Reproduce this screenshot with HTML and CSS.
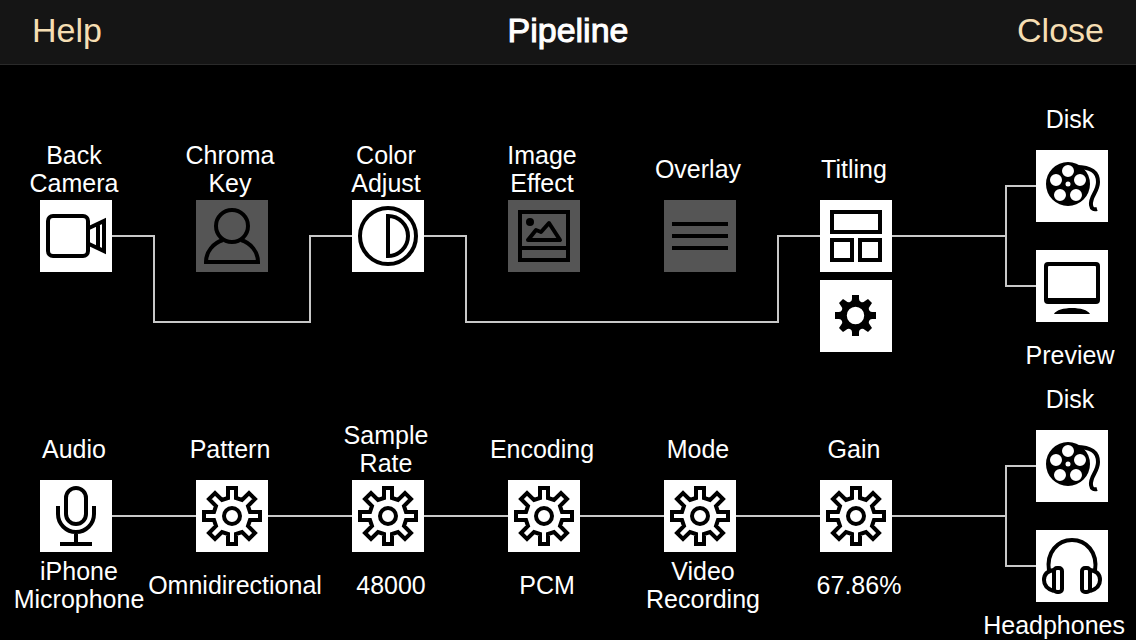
FILE: index.html
```html
<!DOCTYPE html>
<html lang="en">
<head>
<meta charset="utf-8">
<meta name="viewport" content="width=device-width, initial-scale=1">
<title>Pipeline</title>
<link rel="stylesheet" href="styles.css">
</head>
<body>
<svg class="sprite" aria-hidden="true">
  <symbol id="camera" viewBox="0 0 72 72"><rect x="8" y="16" width="40" height="40" rx="5"/><path d="M49 28 64 21V51L49 44M58 24V48"/></symbol>
  <symbol id="person" viewBox="0 0 72 72"><circle cx="36" cy="26" r="16"/><path d="M27 40C17 43 10 52 10 62H62C62 52 55 43 45 40"/></symbol>
  <symbol id="contrast" viewBox="0 0 72 72"><circle cx="36" cy="36" r="28"/><path d="M36 16A20 20 0 0 1 36 56Z"/></symbol>
  <symbol id="image" viewBox="0 0 72 72"><rect x="12" y="12" width="48" height="48"/><path stroke-linejoin="round" d="M12 48H60M20 40 28 30 33 32 41 23 52 40Z"/><circle class="solid" cx="22" cy="22" r="4"/></symbol>
  <symbol id="lines" viewBox="0 0 72 72"><path d="M8 24H64M8 36H64M8 48H64"/></symbol>
  <symbol id="layout" viewBox="0 0 72 72"><path d="M12 12H60V32H12ZM12 40H32V60H12ZM40 40H60V60H40Z"/></symbol>
  <symbol id="cog" viewBox="0 0 72 72">
    <path class="solid" fill-rule="evenodd" d="M32 15H39V19Q39 21 41 22T45 21L48 19 52 23 50 26Q48 28 49 30T52 32H56V39H52Q50 39 49 41T50 45L52 48 48 52 45 50Q43 48 41 49T39 52V56H32V52Q32 50 30 49T26 50L23 52 19 48 21 45Q23 43 22 41T19 39H15V32H19Q21 32 22 30T21 26L19 23 23 19 26 21Q28 23 30 22T32 19ZM26.800 35.500a8.700 8.700 0 1 0 17.400 0a8.700 8.700 0 1 0-17.400 0Z"/>
  </symbol>
  <symbol id="gear" viewBox="0 0 72 72"><path d="M32 18V8H40V18L46 20 53 13 59 19 52 26 54 32H64V40H54L52 46 59 53 53 59 46 52 40 54V64H32V54L26 52 19 59 13 53 20 46 18 40H8V32H18L20 26 13 19 19 13 26 20Z"/><circle cx="36" cy="36" r="8"/></symbol>
  <symbol id="reel" viewBox="0 0 72 72">
    <path class="solid" fill-rule="evenodd" d="M10 34a22 22 0 1 0 44 0a22 22 0 1 0-44 0ZM26 21a6 6 0 1 1 12 0a6 6 0 1 1-12 0ZM14 30a6 6 0 1 1 12 0a6 6 0 1 1-12 0ZM38 30a6 6 0 1 1 12 0a6 6 0 1 1-12 0ZM18 45a6 6 0 1 1 12 0a6 6 0 1 1-12 0ZM34 45a6 6 0 1 1 12 0a6 6 0 1 1-12 0ZM29.500 34a2.500 2.500 0 1 1 5 0a2.500 2.500 0 1 1-5 0Z"/>
    <path d="M40 17C54 17 62 21 62 32C62 42 54 46 55 55C55.500 59 58 60 61 59"/>
  </symbol>
  <symbol id="monitor" viewBox="0 0 72 72"><path class="solid" fill-rule="evenodd" d="M12 12H60Q64 12 64 16V50Q64 54 60 54H12Q8 54 8 50V16Q8 12 12 12ZM13 16Q12 16 12 17V48H60V17Q60 16 59 16ZM18 64C20 60 28 58 36 58S52 60 54 64Z"/></symbol>
  <symbol id="mic" viewBox="0 0 72 72"><rect x="26" y="8" width="20" height="36" rx="10"/><path d="M18 26V34A18 18 0 0 0 54 34V26M36 52V64M20 64H52"/></symbol>
  <symbol id="headphones" viewBox="0 0 72 72"><path d="M13 41C10 22 22 10 36 10S62 22 59 41M18 40C11 41 8 45 8 50S11 59 18 61M54 40C61 41 64 45 64 50S61 59 54 61"/><rect x="18" y="38" width="8" height="24" rx="3"/><rect x="46" y="38" width="8" height="24" rx="3"/></symbol>
</svg>

<header class="bar">
  <button class="bar-action" type="button">Help</button>
  <h1 class="title">Pipeline</h1>
  <button class="bar-action bar-close" type="button">Close</button>
</header>

<main class="pipelines">
  <section class="pipeline" aria-label="Video">
    <div class="stage">
      <div class="label">Back<br>Camera</div>
      <div class="slot first"><button class="node" type="button" aria-label="Back Camera"><svg><use href="#camera"/></svg></button></div>
    </div>
    <div class="stage">
      <div class="label">Chroma<br>Key</div>
      <div class="slot bypass enter leave"><button class="node off" type="button" aria-label="Chroma Key"><svg><use href="#person"/></svg></button></div>
    </div>
    <div class="stage">
      <div class="label">Color<br>Adjust</div>
      <div class="slot"><button class="node" type="button" aria-label="Color Adjust"><svg><use href="#contrast"/></svg></button></div>
    </div>
    <div class="stage">
      <div class="label">Image<br>Effect</div>
      <div class="slot bypass enter"><button class="node off" type="button" aria-label="Image Effect"><svg><use href="#image"/></svg></button></div>
    </div>
    <div class="stage">
      <div class="label">Overlay</div>
      <div class="slot bypass leave"><button class="node off" type="button" aria-label="Overlay"><svg><use href="#lines"/></svg></button></div>
    </div>
    <div class="stage">
      <div class="label">Titling</div>
      <div class="slot"><button class="node" type="button" aria-label="Titling"><svg><use href="#layout"/></svg></button></div>
      <button class="node settings" type="button" aria-label="Titling settings"><svg><use href="#cog"/></svg></button>
    </div>
    <div class="outputs">
      <div class="label out-label">Disk</div>
      <div class="branches">
        <button class="node" type="button" aria-label="Disk"><svg><use href="#reel"/></svg></button>
        <button class="node" type="button" aria-label="Preview"><svg><use href="#monitor"/></svg></button>
      </div>
      <div class="out-label below">Preview</div>
    </div>
  </section>

  <section class="pipeline" aria-label="Audio">
    <div class="stage">
      <div class="label">Audio</div>
      <div class="slot first"><button class="node" type="button" aria-label="Audio"><svg><use href="#mic"/></svg></button></div>
      <div class="label value">iPhone<br>Microphone</div>
    </div>
    <div class="stage">
      <div class="label">Pattern</div>
      <div class="slot"><button class="node" type="button" aria-label="Pattern"><svg><use href="#gear"/></svg></button></div>
      <div class="label value">Omnidirectional</div>
    </div>
    <div class="stage">
      <div class="label">Sample<br>Rate</div>
      <div class="slot"><button class="node" type="button" aria-label="Sample Rate"><svg><use href="#gear"/></svg></button></div>
      <div class="label value">48000</div>
    </div>
    <div class="stage">
      <div class="label">Encoding</div>
      <div class="slot"><button class="node" type="button" aria-label="Encoding"><svg><use href="#gear"/></svg></button></div>
      <div class="label value">PCM</div>
    </div>
    <div class="stage">
      <div class="label">Mode</div>
      <div class="slot"><button class="node" type="button" aria-label="Mode"><svg><use href="#gear"/></svg></button></div>
      <div class="label value">Video<br>Recording</div>
    </div>
    <div class="stage">
      <div class="label">Gain</div>
      <div class="slot"><button class="node" type="button" aria-label="Gain"><svg><use href="#gear"/></svg></button></div>
      <div class="label value">67.86%</div>
    </div>
    <div class="outputs">
      <div class="label out-label">Disk</div>
      <div class="branches">
        <button class="node" type="button" aria-label="Disk"><svg><use href="#reel"/></svg></button>
        <button class="node" type="button" aria-label="Headphones"><svg><use href="#headphones"/></svg></button>
      </div>
      <div class="edge-label">Headphones</div>
    </div>
  </section>
</main>
</body>
</html>
```
FILE: styles.css
```css
*,
*::before,
*::after {
  box-sizing: border-box;
}

body {
  margin: 0;
  background: #000;
  color: #fff;
  font: 25px/28px "Liberation Sans", Arial, sans-serif;
}

button {
  margin: 0;
  padding: 0;
  border: 0;
  background: none;
  font: inherit;
  cursor: pointer;
}

.sprite {
  position: absolute;
  width: 0;
  height: 0;
}

/* Top bar */
.bar {
  display: grid;
  grid-template-columns: 1fr auto 1fr;
  align-items: center;
  padding: 10px 32px 14px;
  border-bottom: 1px solid #2a2a2a;
  background: #151515;
}

.bar-action {
  justify-self: start;
  color: #f5deb3;
  font-size: 34px;
  line-height: 40px;
}

.bar-close {
  justify-self: end;
}

/* Medium weight: regular face with a thin outline */
.title {
  margin: 0;
  font-size: 34px;
  font-weight: 400;
  line-height: 40px;
  -webkit-text-stroke: 1px #fff;
}

/* Pipelines */
.pipelines {
  display: flex;
  flex-direction: column;
  gap: 2px;
  padding-top: 26px;
  overflow-x: clip;
}

.pipeline {
  display: grid;
  grid-template-columns: repeat(6, minmax(0, 156fr)) minmax(0, 202fr);
  margin-left: -2px;
}

.stage {
  display: flex;
  flex-direction: column;
  align-items: center;
  padding-top: 50px;
}

.label {
  display: flex;
  align-items: center;
  justify-content: center;
  height: 56px;
  margin-bottom: 3px;
  padding-right: 4px;
  text-align: center;
  white-space: nowrap;
}

.value {
  margin: 5px 0 0;
  padding: 0 0 0 6px;
}

.slot {
  position: relative;
  display: flex;
  justify-content: center;
  width: 100%;
}

/* Wires */
.slot::before {
  content: "";
  position: absolute;
  top: 35px;
  right: 0;
  left: 0;
  height: 2px;
  background: #c8c8c8;
}

.slot.first::before {
  left: 50%;
}

.slot.bypass::before {
  height: 88px;
  border: 0 solid #c8c8c8;
  border-bottom-width: 2px;
  background: none;
}

.slot.enter::before {
  left: -1px;
  border-left-width: 2px;
}

.slot.leave::before {
  right: -1px;
  border-right-width: 2px;
}

/* Nodes */
.node {
  position: relative;
  display: block;
  width: 72px;
  height: 72px;
  background: #fff;
  color: #000;
}

.node svg {
  display: block;
  width: 100%;
  height: 100%;
  fill: none;
  stroke: #000;
  stroke-width: 4px;
}

.node.off {
  background: #555;
}

.solid {
  fill: #000;
  stroke: none;
}

.settings {
  margin-top: 8px;
}

/* Outputs */
.outputs {
  display: flex;
  flex-direction: column;
  align-items: flex-end;
}

.out-label {
  display: flex;
  justify-content: center;
  width: 72px;
  margin-right: 30px;
  padding: 0;
  white-space: nowrap;
}

.below {
  margin-top: 19px;
}

.edge-label {
  margin: 9px 11px 0 0;
}

.branches {
  position: relative;
  display: flex;
  flex-direction: column;
  align-items: flex-end;
  gap: 28px;
  width: 100%;
  padding-right: 28px;
}

.branches::before {
  content: "";
  position: absolute;
  top: 35px;
  right: 100px;
  bottom: 35px;
  width: 31px;
  border: 2px solid #c8c8c8;
  border-right: 0;
}

.branches::after {
  content: "";
  position: absolute;
  top: calc(50% - 1px);
  right: 131px;
  left: 0;
  height: 2px;
  background: #c8c8c8;
}
```
